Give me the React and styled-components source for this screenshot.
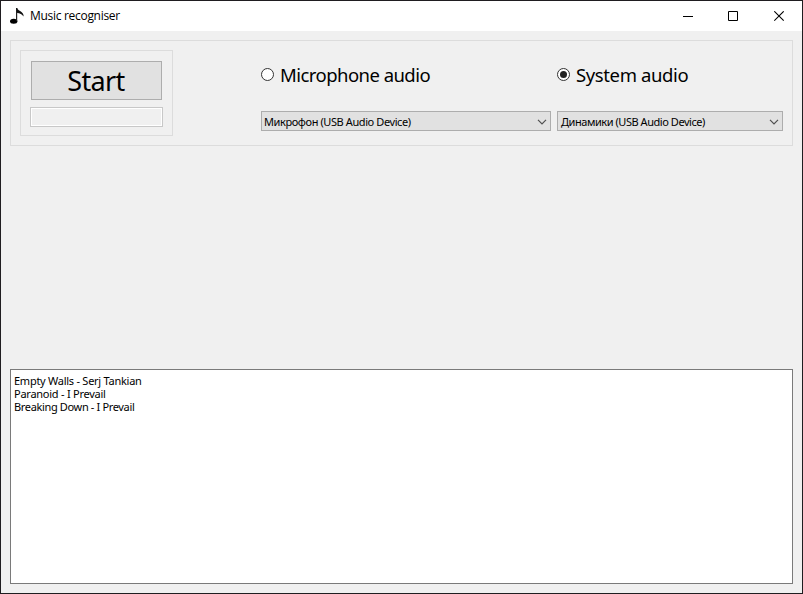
import React, { useState } from 'react';
import styled, { createGlobalStyle } from 'styled-components';

const GlobalStyle = createGlobalStyle`
  *, *::before, *::after { box-sizing: border-box; }
  body { margin: 0; background: #f0f0f0; overflow: hidden; }
`;

const Window = styled.div`
  display: flex;
  flex-direction: column;
  width: 803px;
  height: 594px;
  border: 1px solid #1f1d20;
  background: #f0f0f0;
  color: #000;
  font: 11px/13px 'Noto Sans', sans-serif;
  cursor: default;
`;

const TitleBar = styled.header`
  display: flex;
  align-items: center;
  flex: none;
  height: 30px;
  padding-left: 8px;
  background: #fff;
`;

const Title = styled.h1`
  flex: 1;
  margin: 0 0 0 5px;
  padding-bottom: 1px;
  font: 400 12px/17px 'Open Sans', sans-serif;
  letter-spacing: -0.3px;
`;

const NoteIcon = styled.svg`
  display: block;
  width: 16px;
  height: 18px;
`;

const CaptionButton = styled.button`
  display: grid;
  place-items: center;
  width: 45px;
  height: 30px;
  padding: 0;
  border: 0;
  background: transparent;
`;

const CloseButton = styled(CaptionButton)`
  width: 46px;
  padding-left: 1px;
`;

const CaptionGlyph = styled.svg`
  display: block;
  width: 11px;
  height: 11px;
  fill: none;
  stroke: #000;
`;

const Body = styled.main`
  display: flex;
  flex-direction: column;
  justify-content: space-between;
  flex: 1;
  padding: 9px;
`;

const Controls = styled.section`
  display: flex;
  height: 106px;
  padding: 9px;
  border: 1px solid #dcdcdc;
`;

const StartGroup = styled.div`
  display: flex;
  flex-direction: column;
  align-items: center;
  gap: 7px;
  width: 153px;
  height: 86px;
  padding-top: 10px;
  border: 1px solid #dcdcdc;
`;

const StartButton = styled.button`
  width: 131px;
  height: 39px;
  padding: 0 1px 0 0;
  border: 1px solid #adadad;
  background: #e1e1e1;
  color: #000;
  font: 27px/37px 'Noto Sans', sans-serif;
  letter-spacing: -0.65px;
`;

const Progress = styled.div`
  width: 133px;
  height: 20px;
  border: 1px solid #c8c8c8;
  background: #f0f0f0;
  box-shadow: inset 0 0 0 1px #fff;
`;

const Sources = styled.div`
  display: grid;
  grid-template-columns: 290px 226px;
  column-gap: 6px;
  margin-left: 88px;
`;

const Source = styled.div`
  display: flex;
  flex-direction: column;
  padding-top: 11px;
`;

const RadioRow = styled.label`
  display: flex;
  align-items: center;
  gap: 6px;
  height: 27px;
  margin-bottom: 23px;
  font-size: 18.5px;
  line-height: 27px;
  letter-spacing: ${(p) => p.$tracking}px;
  white-space: nowrap;
`;

const RadioMark = styled.svg`
  flex: none;
  width: 13px;
  height: 13px;
`;

const Combo = styled.div`
  display: flex;
  align-items: center;
  justify-content: space-between;
  height: 20px;
  padding: 0 3px 0 2px;
  border: 1px solid #adadad;
  background: #e1e1e1;
  letter-spacing: ${(p) => p.$tracking}px;
  white-space: nowrap;
`;

const ComboText = styled.span`
  margin-left: ${(p) => p.$inset || 0}px;
  padding-top: 2px;
  line-height: 14px;
`;

const Chevron = styled.svg`
  width: 10px;
  height: 6px;
  margin-top: 1px;
  fill: none;
  stroke: #505050;
  stroke-width: 1.2;
`;

const Results = styled.ul`
  height: 215px;
  margin: 0;
  padding: 4px 3px;
  border: 1px solid #7a7a7a;
  background: #fff;
  list-style: none;
`;

const Track = styled.li`
  height: 13px;
  letter-spacing: ${(p) => p.$tracking}px;
  white-space: nowrap;
`;

const sources = [
  { id: 'mic', label: 'Microphone audio', device: 'Микрофон (USB Audio Device)', tracking: -0.54, comboTracking: -0.41, inset: 0 },
  { id: 'system', label: 'System audio', device: 'Динамики (USB Audio Device)', tracking: -0.38, comboTracking: -0.45, inset: 1 },
];

const tracks = [
  { name: 'Empty Walls - Serj Tankian', tracking: -0.26 },
  { name: 'Paranoid - I Prevail', tracking: -0.25 },
  { name: 'Breaking Down - I Prevail', tracking: -0.35 },
];

export default function App() {
  const [selected, setSelected] = useState('system');
  return (
    <>
      <GlobalStyle />
      <Window>
        <TitleBar>
          <NoteIcon viewBox="0 0 16 18">
            <ellipse cx="4.7" cy="14.3" rx="3.7" ry="2.5" fill="#000" />
            <path d="M7.6 1V14" stroke="#222" strokeWidth="1.2" />
            <path d="M7 1H8.2C8.5 3 10.8 3.4 12.5 4.9C14.4 6.6 14.9 8 14.4 9.5C13.2 7.2 10.8 6.2 8.2 6Z" fill="#111" />
          </NoteIcon>
          <Title>Music recogniser</Title>
          <CaptionButton aria-label="Minimize">
            <CaptionGlyph viewBox="0 0 11 11"><path d="M0 5.5H10" /></CaptionGlyph>
          </CaptionButton>
          <CaptionButton aria-label="Maximize">
            <CaptionGlyph viewBox="0 0 11 11"><path d="M.5 .5H9.5V9.5H.5Z" /></CaptionGlyph>
          </CaptionButton>
          <CloseButton aria-label="Close">
            <CaptionGlyph viewBox="0 0 11 11"><path d="M.3 .3L9.7 9.7M9.7 .3L.3 9.7" strokeWidth="1.1" /></CaptionGlyph>
          </CloseButton>
        </TitleBar>
        <Body>
          <Controls>
            <StartGroup>
              <StartButton>Start</StartButton>
              <Progress />
            </StartGroup>
            <Sources>
              {sources.map((s) => (
                <Source key={s.id}>
                  <RadioRow $tracking={s.tracking} onClick={() => setSelected(s.id)}>
                    <RadioMark viewBox="0 0 13 13">
                      <circle cx="6.5" cy="6.5" r="6" fill="#fff" stroke="#333" />
                      {selected === s.id && <circle cx="6.5" cy="6.5" r="3.5" fill="#222" />}
                    </RadioMark>
                    <span>{s.label}</span>
                  </RadioRow>
                  <Combo $tracking={s.comboTracking}>
                    <ComboText $inset={s.inset}>{s.device}</ComboText>
                    <Chevron viewBox="0 0 10 6"><path d="M1 .8L5 4.8L9 .8" /></Chevron>
                  </Combo>
                </Source>
              ))}
            </Sources>
          </Controls>
          <Results>
            {tracks.map((t) => (
              <Track key={t.name} $tracking={t.tracking}>{t.name}</Track>
            ))}
          </Results>
        </Body>
      </Window>
    </>
  );
}
